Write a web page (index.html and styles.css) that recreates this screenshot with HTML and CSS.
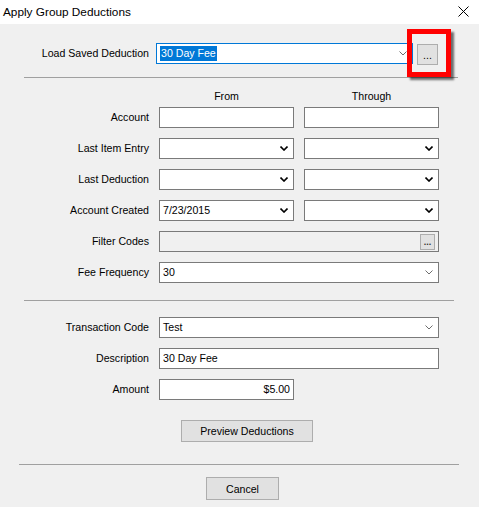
FILE: index.html
```html
<!DOCTYPE html>
<html lang="en">

<head>
    <meta charset="utf-8">
    <title>Apply Group Deductions</title>
    <link rel="stylesheet" href="styles.css">
</head>

<body>
    <div class="window">
        <div class="titlebar">
            <span class="title">Apply Group Deductions</span>
            <svg class="close" width="11" height="11" viewBox="0 0 11 11">
                <path d="M0.5 0.5 L10.5 10.5 M10.5 0.5 L0.5 10.5" stroke="#000" stroke-width="1" fill="none" />
            </svg>
        </div>

        <div class="dialog">
            <div class="load-row">
                <span class="label load-label">Load Saved Deduction</span>
                <div class="field combo focused load-combo">
                    <span class="selected-text">30 Day Fee</span>
                    <svg class="chev light" width="8" height="5" viewBox="0 0 8 5">
                        <polyline points="0.5,0.5 4,4 7.5,0.5" />
                    </svg>
                </div>
                <div class="more-wrap">
                    <button class="btn more" type="button">...</button>
                    <div class="callout"></div>
                </div>
            </div>

            <div class="sep sep-top"></div>

            <div class="col-heads">
                <span>From</span>
                <span>Through</span>
            </div>

            <div class="form-grid">
                <span class="label">Account</span>
                <div class="field"></div>
                <div class="field"></div>

                <span class="label">Last Item Entry</span>
                <div class="field combo">
                    <span></span>
                    <svg class="chev dark" width="8" height="5" viewBox="0 0 8 5"><polyline points="0.5,0.5 4,4 7.5,0.5" /></svg>
                </div>
                <div class="field combo">
                    <span></span>
                    <svg class="chev dark" width="8" height="5" viewBox="0 0 8 5"><polyline points="0.5,0.5 4,4 7.5,0.5" /></svg>
                </div>

                <span class="label">Last Deduction</span>
                <div class="field combo">
                    <span></span>
                    <svg class="chev dark" width="8" height="5" viewBox="0 0 8 5"><polyline points="0.5,0.5 4,4 7.5,0.5" /></svg>
                </div>
                <div class="field combo">
                    <span></span>
                    <svg class="chev dark" width="8" height="5" viewBox="0 0 8 5"><polyline points="0.5,0.5 4,4 7.5,0.5" /></svg>
                </div>

                <span class="label">Account Created</span>
                <div class="field combo">
                    <span>7/23/2015</span>
                    <svg class="chev dark" width="8" height="5" viewBox="0 0 8 5"><polyline points="0.5,0.5 4,4 7.5,0.5" /></svg>
                </div>
                <div class="field combo">
                    <span></span>
                    <svg class="chev dark" width="8" height="5" viewBox="0 0 8 5"><polyline points="0.5,0.5 4,4 7.5,0.5" /></svg>
                </div>

                <span class="label">Filter Codes</span>
                <div class="field combo disabled wide">
                    <span></span>
                    <button class="btn dots" type="button">...</button>
                </div>

                <span class="label">Fee Frequency</span>
                <div class="field combo wide">
                    <span>30</span>
                    <svg class="chev light" width="8" height="5" viewBox="0 0 8 5"><polyline points="0.5,0.5 4,4 7.5,0.5" /></svg>
                </div>
            </div>

            <div class="sep sep-mid"></div>

            <div class="form-grid lower">
                <span class="label">Transaction Code</span>
                <div class="field combo wide">
                    <span>Test</span>
                    <svg class="chev light" width="8" height="5" viewBox="0 0 8 5"><polyline points="0.5,0.5 4,4 7.5,0.5" /></svg>
                </div>

                <span class="label">Description</span>
                <div class="field wide">30 Day Fee</div>

                <span class="label">Amount</span>
                <div class="field amount">$5.00</div>
            </div>

            <button class="btn preview" type="button">Preview Deductions</button>

            <div class="sep sep-bottom"></div>

            <button class="btn cancel" type="button">Cancel</button>
        </div>
    </div>
</body>

</html>
```

FILE: styles.css
```css
:root {
    --dialog-bg: #f0f0f0;
    --field-border: #7a7a7a;
    --btn-bg: #e1e1e1;
    --btn-border: #adadad;
    --focus: #0078d7;
    --sep: #a0a0a0;
    --row-h: 21px;
    --font-size: 10.6px;
}

*,
::before,
::after {
    box-sizing: border-box;
    margin: 0;
    padding: 0;
}

body {
    width: 479px;
    height: 507px;
    overflow: hidden;
    font-family: "Liberation Sans", Arial, sans-serif;
    font-size: var(--font-size);
    color: #000;
    background: var(--dialog-bg);
}

.titlebar {
    height: 24px;
    background: #fff;
    display: flex;
    align-items: center;
    justify-content: space-between;
    padding: 0 10px 1px 3px;
}

.title {
    font-size: 11.8px;
}

.close {
    display: block;
}

.dialog {
    position: relative;
}

/* saved deduction picker */
.load-row {
    display: flex;
    align-items: flex-start;
    margin-top: 19px;
    height: 22px;
}

.load-label {
    width: 149px;
    margin-right: 7px;
    line-height: 21px;
}

.load-combo {
    width: 257px;
    height: 21px;
    padding-left: 2px;
}

.selected-text {
    background: var(--focus);
    color: #fff;
    line-height: 15px;
    padding: 0 1px;
}

.more-wrap {
    position: relative;
    margin: 1px 0 0 4px;
}

.more {
    width: 21px;
    height: 21px;
    line-height: 14px;
}

.callout {
    position: absolute;
    left: -10px;
    top: -15px;
    width: 44px;
    height: 48px;
    border: 5px solid #f00;
    box-shadow: 3px 3px 2px rgba(0, 0, 0, 0.55);
    pointer-events: none;
}

/* dividers */
.sep {
    height: 1px;
    background: var(--sep);
}

.sep-top {
    margin: 12px 0 0 24px;
    width: 434px;
}

.sep-mid {
    margin: 17px 0 0 24px;
    width: 430px;
}

.sep-bottom {
    margin: 22px 0 0 19px;
    width: 440px;
}

/* column headings */
.col-heads {
    display: grid;
    grid-template-columns: 135px 135px;
    column-gap: 10px;
    margin: 12px 0 4px 159px;
    height: 13px;
    line-height: 13px;
    text-align: center;
}

.form-grid {
    display: grid;
    grid-template-columns: 149px 135px 135px;
    grid-auto-rows: var(--row-h);
    column-gap: 10px;
    row-gap: 10px;
    align-items: stretch;
}

.form-grid.lower {
    margin-top: 16px;
}

.label {
    text-align: right;
    line-height: var(--row-h);
    white-space: nowrap;
}

.field {
    background: #fff;
    border: 1px solid var(--field-border);
    padding: 0 3px;
    line-height: 19px;
    white-space: nowrap;
    overflow: hidden;
}

.field.wide {
    grid-column: 2 / 4;
}

.field.focused {
    border-color: var(--focus);
}

.field.disabled {
    background: var(--dialog-bg);
}

.field.amount {
    text-align: right;
    padding-right: 3px;
}

.combo {
    display: flex;
    align-items: center;
    justify-content: space-between;
    padding-right: 5px;
}

.chev {
    display: block;
    flex: none;
    fill: none;
}

.chev.dark {
    stroke: #000;
    stroke-width: 1.6;
}

.chev.light {
    stroke: #6d6d6d;
    stroke-width: 1;
}

/* buttons */
.btn {
    display: block;
    font-family: inherit;
    font-size: var(--font-size);
    color: #000;
    background: var(--btn-bg);
    border: 1px solid var(--btn-border);
}

.dots {
    width: 15px;
    height: 16px;
    margin-right: -2px;
    font-size: 9px;
    font-weight: bold;
    line-height: 10px;
    color: #333;
}

.preview {
    margin: 20px 0 0 181px;
    width: 132px;
    height: 22px;
}

.cancel {
    margin: 12px 0 0 206px;
    width: 73px;
    height: 23px;
}
```
